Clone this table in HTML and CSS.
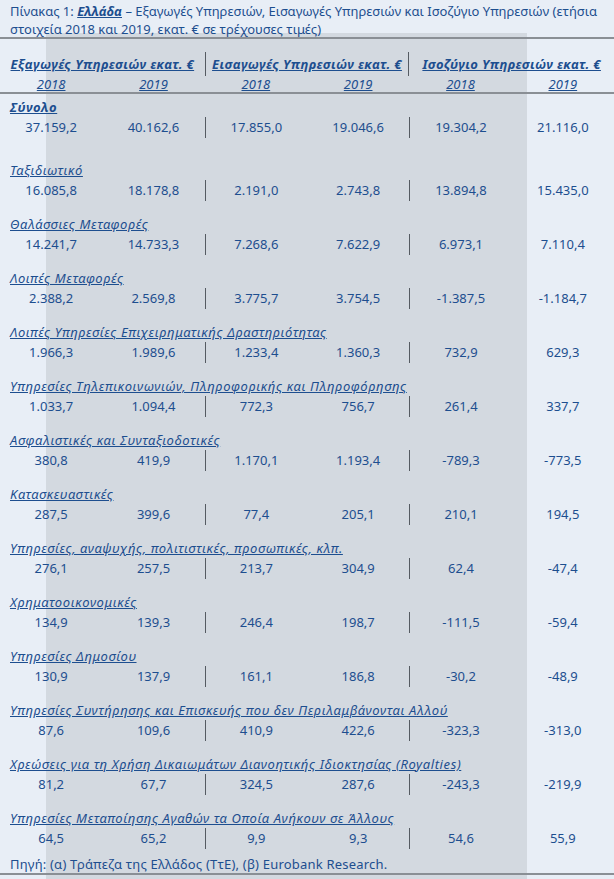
FILE: index.html
```html
<!DOCTYPE html>
<html lang="el">
<head>
    <meta charset="UTF-8">
    <meta name="viewport" content="width=device-width, initial-scale=1.0">
    <title>Ελλάδα – Ισοζύγιο Υπηρεσιών</title>
    <link rel="stylesheet" href="styles.css">
</head>
<body>
    <p class="caption">Πίνακας 1: <strong>Ελλάδα</strong> – Εξαγωγές Υπηρεσιών, Εισαγωγές Υπηρεσιών και Ισοζύγιο Υπηρεσιών (ετήσια<br>στοιχεία 2018 και 2019, εκατ. € σε τρέχουσες τιμές)</p>

    <div class="panel">
        <div class="head">
            <div class="group">Εξαγωγές Υπηρεσιών εκατ. €</div>
            <div class="group sep">Εισαγωγές Υπηρεσιών εκατ. €</div>
            <div class="group">Ισοζύγιο Υπηρεσιών εκατ. €</div>
        </div>
        <div class="years">
            <span>2018</span><span>2019</span><span>2018</span><span>2019</span><span>2018</span><span>2019</span>
        </div>

        <div class="rows">
            <div class="row total">
                <div class="label">Σύνολο</div>
                <div class="vals"><span>37.159,2</span><span>40.162,6</span><span class="sep">17.855,0</span><span>19.046,6</span><span class="sep">19.304,2</span><span>21.116,0</span></div>
            </div>
            <div class="row">
                <div class="label">Ταξιδιωτικό</div>
                <div class="vals"><span>16.085,8</span><span>18.178,8</span><span class="sep">2.191,0</span><span>2.743,8</span><span class="sep">13.894,8</span><span>15.435,0</span></div>
            </div>
            <div class="row">
                <div class="label">Θαλάσσιες Μεταφορές</div>
                <div class="vals"><span>14.241,7</span><span>14.733,3</span><span class="sep">7.268,6</span><span>7.622,9</span><span class="sep">6.973,1</span><span>7.110,4</span></div>
            </div>
            <div class="row">
                <div class="label">Λοιπές Μεταφορές</div>
                <div class="vals"><span>2.388,2</span><span>2.569,8</span><span class="sep">3.775,7</span><span>3.754,5</span><span class="sep">-1.387,5</span><span>-1.184,7</span></div>
            </div>
            <div class="row">
                <div class="label">Λοιπές Υπηρεσίες Επιχειρηματικής Δραστηριότητας</div>
                <div class="vals"><span>1.966,3</span><span>1.989,6</span><span class="sep">1.233,4</span><span>1.360,3</span><span class="sep">732,9</span><span>629,3</span></div>
            </div>
            <div class="row">
                <div class="label">Υπηρεσίες Τηλεπικοινωνιών, Πληροφορικής και Πληροφόρησης</div>
                <div class="vals"><span>1.033,7</span><span>1.094,4</span><span class="sep">772,3</span><span>756,7</span><span class="sep">261,4</span><span>337,7</span></div>
            </div>
            <div class="row">
                <div class="label">Ασφαλιστικές και Συνταξιοδοτικές</div>
                <div class="vals"><span>380,8</span><span>419,9</span><span class="sep">1.170,1</span><span>1.193,4</span><span class="sep">-789,3</span><span>-773,5</span></div>
            </div>
            <div class="row">
                <div class="label">Κατασκευαστικές</div>
                <div class="vals"><span>287,5</span><span>399,6</span><span class="sep">77,4</span><span>205,1</span><span class="sep">210,1</span><span>194,5</span></div>
            </div>
            <div class="row">
                <div class="label">Υπηρεσίες, αναψυχής, πολιτιστικές, προσωπικές, κλπ.</div>
                <div class="vals"><span>276,1</span><span>257,5</span><span class="sep">213,7</span><span>304,9</span><span class="sep">62,4</span><span>-47,4</span></div>
            </div>
            <div class="row">
                <div class="label">Χρηματοοικονομικές</div>
                <div class="vals"><span>134,9</span><span>139,3</span><span class="sep">246,4</span><span>198,7</span><span class="sep">-111,5</span><span>-59,4</span></div>
            </div>
            <div class="row">
                <div class="label">Υπηρεσίες Δημοσίου</div>
                <div class="vals"><span>130,9</span><span>137,9</span><span class="sep">161,1</span><span>186,8</span><span class="sep">-30,2</span><span>-48,9</span></div>
            </div>
            <div class="row">
                <div class="label">Υπηρεσίες Συντήρησης και Επισκευής που δεν Περιλαμβάνονται Αλλού</div>
                <div class="vals"><span>87,6</span><span>109,6</span><span class="sep">410,9</span><span>422,6</span><span class="sep">-323,3</span><span>-313,0</span></div>
            </div>
            <div class="row">
                <div class="label">Χρεώσεις για τη Χρήση Δικαιωμάτων Διανοητικής Ιδιοκτησίας (Royalties)</div>
                <div class="vals"><span>81,2</span><span>67,7</span><span class="sep">324,5</span><span>287,6</span><span class="sep">-243,3</span><span>-219,9</span></div>
            </div>
            <div class="row">
                <div class="label">Υπηρεσίες Μεταποίησης Αγαθών τα Οποία Ανήκουν σε Άλλους</div>
                <div class="vals"><span>64,5</span><span>65,2</span><span class="sep">9,9</span><span>9,3</span><span class="sep">54,6</span><span>55,9</span></div>
            </div>
        </div>

        <p class="source">Πηγή: (α) Τράπεζα της Ελλάδος (ΤτΕ), (β) Eurobank Research.</p>
    </div>
</body>
</html>
```

FILE: styles.css
```css
body {
    margin: 0;
    background-color: #e8eef6;
    color: #1d4e8f;
    font-family: "Noto Sans", "DejaVu Sans", sans-serif;
    font-size: 13px;
}
.caption {
    margin: 0 0 -5px;
    padding: 2px 10px 0;
    line-height: 18px;
    white-space: nowrap;
}
.caption strong {
    font-style: italic;
    text-decoration: underline;
}
.panel {
    padding-top: 4px;
    min-height: calc(100vh - 37px);
    background: linear-gradient(to right, transparent 46px, #d3d9e0 46px, #d3d9e0 527px, transparent 527px);
}
.head {
    display: grid;
    grid-template-columns: repeat(3, 1fr);
    border-top: 2px solid #8a8f95;
    padding-top: 13px;
}
.group {
    line-height: 24px;
    text-align: center;
    font-weight: bold;
    font-style: italic;
    text-decoration: underline;
    letter-spacing: 0.4px;
    white-space: nowrap;
}
.group.sep {
    border-left: 1px solid #555b62;
    border-right: 1px solid #555b62;
}
.years,
.vals {
    display: grid;
    grid-template-columns: repeat(6, 1fr);
    text-align: center;
}
.years {
    line-height: 16px;
    font-style: italic;
    text-decoration: underline;
    border-bottom: 2px solid #8a8f95;
}
.rows {
    padding-top: 3.5px;
}
.row {
    margin-bottom: 14px;
}
.row.total {
    margin-bottom: 23px;
}
.label {
    padding-left: 10px;
    line-height: 19px;
    font-style: italic;
    text-decoration: underline;
    letter-spacing: 0.6px;
    white-space: nowrap;
}
.total .label {
    font-weight: bold;
}
.vals span {
    line-height: 21px;
}
.vals .sep {
    border-left: 1px solid #555b62;
}
.source {
    margin: -8px 0 0;
    padding-left: 10px;
    line-height: 18px;
    letter-spacing: 0.2px;
    border-bottom: 2px solid #8a8f95;
}
```
